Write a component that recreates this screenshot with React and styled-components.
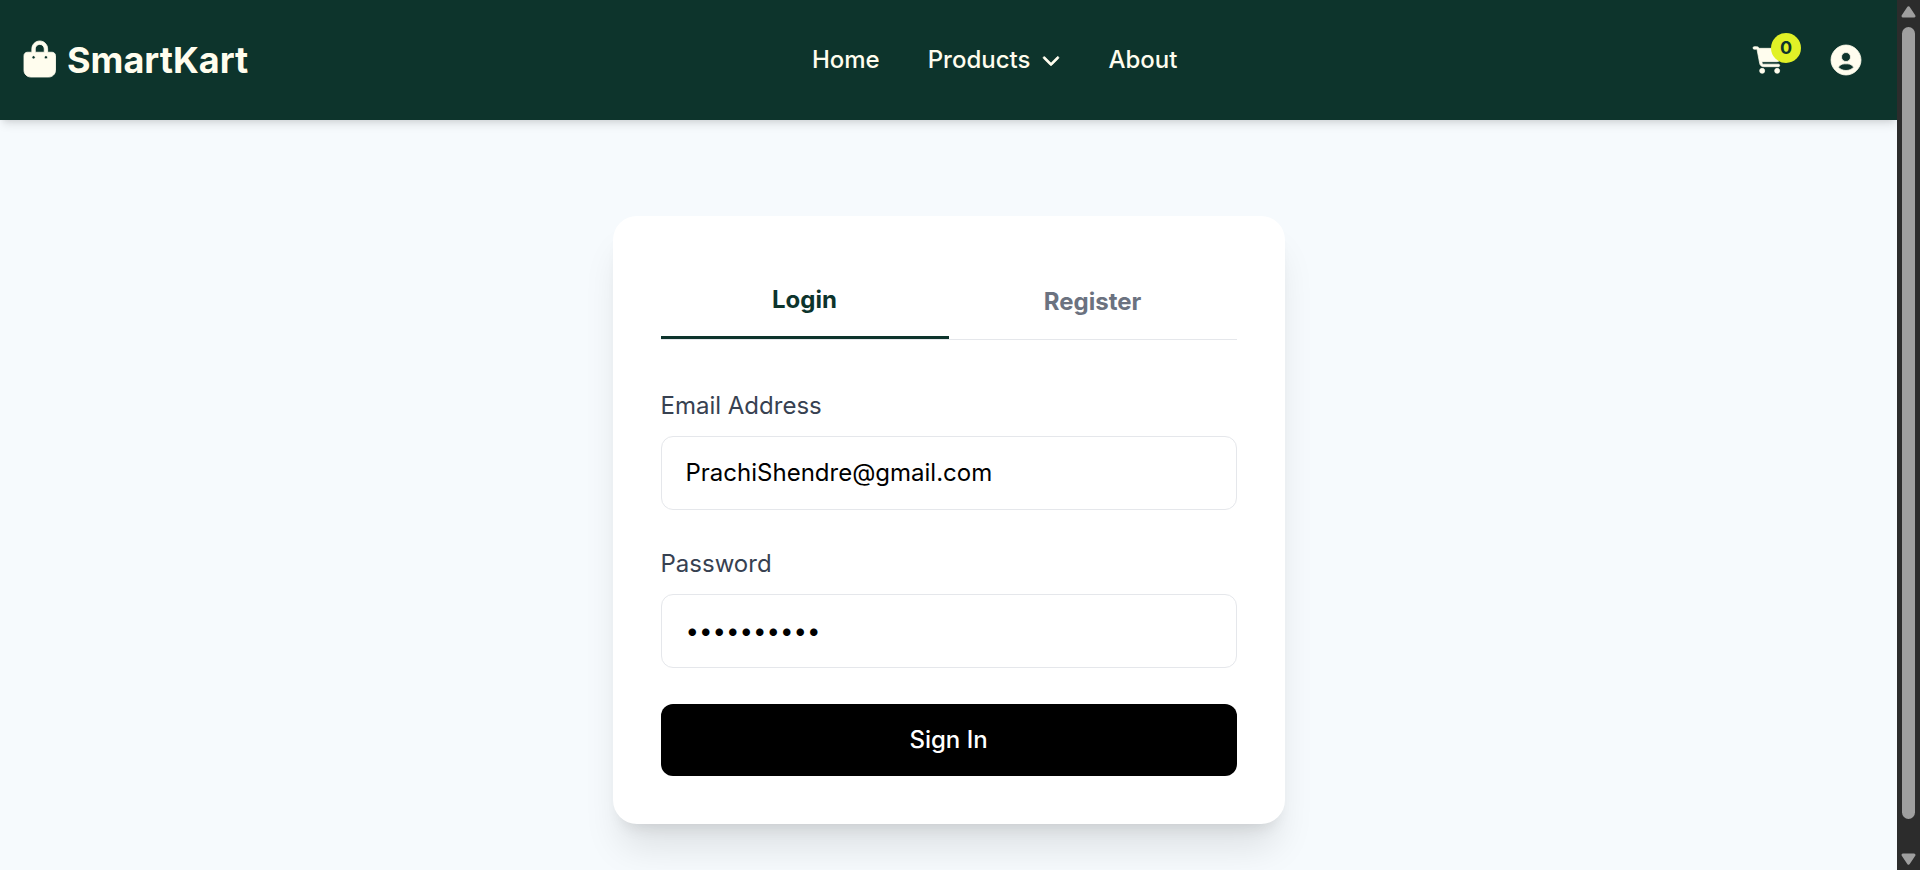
import React from "react";
import styled, { createGlobalStyle } from "styled-components";
import { FaBagShopping, FaCartShopping, FaChevronDown } from "react-icons/fa6";
import { BiSolidUserCircle } from "react-icons/bi";

const color = {
  green: "#0d342c",
  cream: "#fffdee",
  lime: "#e1f127",
  page: "#f6fafd",
  border: "#e5e7eb",
};

const GlobalStyle = createGlobalStyle`
  *, *::before, *::after { box-sizing: border-box; }
  body {
    margin: 0;
    overflow: hidden;
    font-family: Inter, "Liberation Sans", sans-serif;
    font-size: 24px;
    line-height: 36px;
  }
  button, input { font: inherit; }
  svg { display: block; overflow: visible; }
`;

const Screen = styled.div`
  display: flex;
  height: 870px;
  overflow: hidden;
`;

const Page = styled.div`
  flex: 1;
  display: flex;
  flex-direction: column;
  background: ${color.page};
  overflow: hidden;
`;

const Header = styled.header`
  flex: none;
  display: flex;
  align-items: center;
  justify-content: space-between;
  height: 120px;
  padding: 0 24px;
  background: ${color.green};
  color: ${color.cream};
  box-shadow: 0 6px 9px -1.5px rgba(0, 0, 0, 0.1), 0 3px 6px -3px rgba(0, 0, 0, 0.1);
`;

const Brand = styled.a`
  display: flex;
  align-items: center;
  gap: 11.5px;
  font-size: 36px;
  font-weight: 700;
  line-height: 48px;
`;

const BagIcon = styled(FaBagShopping)`
  width: 31.5px;
  height: 36px;
  margin-top: -2px;
  stroke: currentColor;
  stroke-width: 12px;
`;

const CartIcon = styled(FaCartShopping)`
  width: 30px;
  height: 30px;
  margin: 3px;
  stroke: currentColor;
  stroke-width: 14px;
`;

const UserIcon = styled(BiSolidUserCircle)`
  width: 36px;
  height: 36px;
  stroke: currentColor;
  stroke-width: 0.5px;
`;

const ChevronIcon = styled(FaChevronDown)`
  width: 18px;
  height: 18px;
  stroke: currentColor;
  stroke-width: 20px;
`;

const Nav = styled.nav`
  display: flex;
  align-items: center;
  gap: 48px;
  font-weight: 500;
`;

const NavLink = styled.a`
  display: flex;
  align-items: center;
  gap: 12px;
`;

const Actions = styled.div`
  display: flex;
  gap: 24px;
`;

const IconButton = styled.button`
  position: relative;
  padding: 9px;
  border: 0;
  background: none;
  color: inherit;
`;

const Badge = styled.span`
  position: absolute;
  top: 0;
  right: -6px;
  display: flex;
  align-items: center;
  justify-content: center;
  width: 30px;
  height: 30px;
  border-radius: 50%;
  background: ${color.lime};
  color: ${color.green};
  font-size: 18px;
  font-weight: 700;
  line-height: 24px;
`;

const Main = styled.main`
  display: flex;
  justify-content: center;
  align-items: flex-start;
  padding-top: 96px;
`;

const Card = styled.section`
  width: 672px;
  padding: 48px;
  border-radius: 24px;
  background: #fff;
  box-shadow: 0 30px 37.5px -7.5px rgba(0, 0, 0, 0.1), 0 12px 15px -9px rgba(0, 0, 0, 0.1);
`;

const Tabs = styled.div`
  display: flex;
  margin-bottom: 48px;
  border-bottom: 1px solid ${color.border};
`;

const Tab = styled.button`
  flex: 1;
  padding: 18px 0;
  border: 0;
  border-bottom: ${(p) => (p.$active ? `3px solid ${color.green}` : "0")};
  background: none;
  color: ${(p) => (p.$active ? color.green : "#6b7280")};
  font-weight: 700;
`;

const Form = styled.form`
  display: flex;
  flex-direction: column;
  gap: 36px;
`;

const Field = styled.label`
  display: flex;
  flex-direction: column;
  gap: 12px;
  color: #374151;
`;

const Input = styled.input`
  width: 100%;
  height: 74px;
  padding: 17px 24px 19px;
  border: 1px solid ${color.border};
  border-radius: 12px;
  background: #fff;
  color: #000;
  outline: none;
`;

const Submit = styled.button`
  height: 72px;
  border: 0;
  border-radius: 12px;
  background: #000;
  color: #fff;
  font-weight: 500;
`;

const Scrollbar = styled.div`
  flex: none;
  display: flex;
  flex-direction: column;
  align-items: center;
  width: 23px;
  padding: 6px 0 5px;
  background: #2c2c2c;
  color: #9f9f9f;
`;

const Thumb = styled.div`
  width: 13px;
  height: 792px;
  margin: 9px 0 auto;
  border-radius: 7px;
  background: #9f9f9f;
`;

const Arrow = styled.svg`
  width: 15px;
  height: 12px;
  transform: ${(p) => (p.$down ? "rotate(180deg)" : "none")};
`;

function ScrollArrow({ down }) {
  return (
    <Arrow viewBox="0 0 15 12" $down={down}>
      <path
        d="M7.5 1.8 L13 10 H2 Z"
        fill="currentColor"
        stroke="currentColor"
        strokeWidth="3"
        strokeLinejoin="round"
      />
    </Arrow>
  );
}

export default function App() {
  return (
    <>
      <GlobalStyle />
      <Screen>
        <Page>
          <Header>
            <Brand>
              <BagIcon />
              SmartKart
            </Brand>
            <Nav>
              <NavLink>Home</NavLink>
              <NavLink>
                Products
                <ChevronIcon />
              </NavLink>
              <NavLink>About</NavLink>
            </Nav>
            <Actions>
              <IconButton aria-label="Cart">
                <CartIcon />
                <Badge>0</Badge>
              </IconButton>
              <IconButton aria-label="Account">
                <UserIcon />
              </IconButton>
            </Actions>
          </Header>
          <Main>
            <Card>
              <Tabs>
                <Tab $active>Login</Tab>
                <Tab>Register</Tab>
              </Tabs>
              <Form onSubmit={(e) => e.preventDefault()}>
                <Field>
                  Email Address
                  <Input type="email" defaultValue="PrachiShendre@gmail.com" />
                </Field>
                <Field>
                  Password
                  <Input type="password" defaultValue="smartkart1" />
                </Field>
                <Submit type="submit">Sign In</Submit>
              </Form>
            </Card>
          </Main>
        </Page>
        <Scrollbar>
          <ScrollArrow />
          <Thumb />
          <ScrollArrow down />
        </Scrollbar>
      </Screen>
    </>
  );
}
